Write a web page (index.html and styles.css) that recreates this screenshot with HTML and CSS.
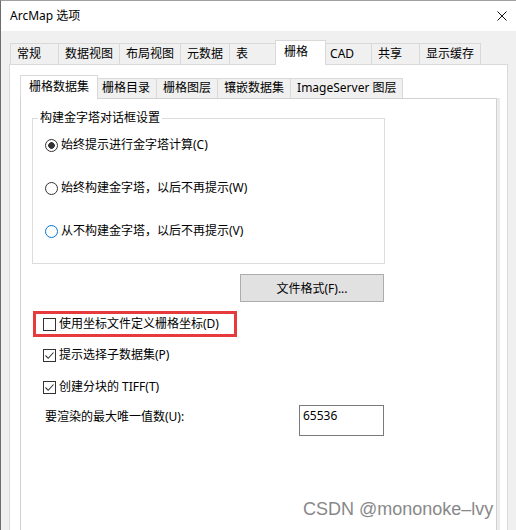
FILE: index.html
```html
<!DOCTYPE html>
<html lang="zh-CN">
<head>
    <meta charset="UTF-8">
    <title>ArcMap 选项</title>
    <link rel="stylesheet" href="styles.css">
</head>
<body>
    <div class="window">
        <div class="titlebar">
            <span class="title">ArcMap 选项</span>
            <svg class="close" width="10" height="10" viewBox="0 0 10 10">
                <path d="M0.5 0.5 L9.5 9.5 M9.5 0.5 L0.5 9.5" stroke="#111" stroke-width="1" fill="none"/>
            </svg>
        </div>
        <div class="dialog-body">
            <div class="tabs">
                <div class="tab">常规</div>
                <div class="tab">数据视图</div>
                <div class="tab">布局视图</div>
                <div class="tab">元数据</div>
                <div class="tab">表</div>
                <div class="tab active">栅格</div>
                <div class="tab">CAD</div>
                <div class="tab">共享</div>
                <div class="tab">显示缓存</div>
            </div>
            <div class="outer-panel">
                <div class="tabs sub-tabs">
                    <div class="tab active">栅格数据集</div>
                    <div class="tab">栅格目录</div>
                    <div class="tab">栅格图层</div>
                    <div class="tab">镶嵌数据集</div>
                    <div class="tab">ImageServer 图层</div>
                </div>
                <div class="inner-panel">
                    <fieldset class="group-box">
                        <legend>构建金字塔对话框设置</legend>
                        <div class="radio-row"><span class="radio checked"></span>始终提示进行金字塔计算(C)</div>
                        <div class="radio-row"><span class="radio"></span>始终构建金字塔，以后不再提示(W)</div>
                        <div class="radio-row"><span class="radio focus"></span>从不构建金字塔，以后不再提示(V)</div>
                    </fieldset>

                    <div class="actions">
                        <button class="btn">文件格式(F)...</button>
                    </div>

                    <div class="highlight">
                        <div class="check-row"><span class="checkbox"></span>使用坐标文件定义栅格坐标(D)</div>
                    </div>
                    <div class="check-row option">
                        <span class="checkbox"><svg width="11" height="11" viewBox="0 0 11 11"><path d="M1.5 5.5 L4.2 8.3 L9.5 2.5" stroke="#333" stroke-width="1.1" fill="none"/></svg></span>提示选择子数据集(P)
                    </div>
                    <div class="check-row option tiff">
                        <span class="checkbox"><svg width="11" height="11" viewBox="0 0 11 11"><path d="M1.5 5.5 L4.2 8.3 L9.5 2.5" stroke="#333" stroke-width="1.1" fill="none"/></svg></span>创建分块的 TIFF(T)
                    </div>

                    <div class="value-row">
                        <label>要渲染的最大唯一值数(U):</label>
                        <div class="value-box">65536</div>
                    </div>
                </div>
            </div>
        </div>
        <div class="watermark">CSDN @mononoke–lvy</div>
    </div>
</body>
</html>
```

FILE: styles.css
```css
body {
    margin: 0;
    font-family: "Noto Sans", "Noto Sans CJK SC", sans-serif;
    font-size: 12px;
    color: #000;
    background-color: #fff;
}

.window {
    position: relative;
    width: 516px;
    height: 530px;
    box-sizing: border-box;
    border-left: 1px solid #6d6d6d;
    border-top: 1px solid #a0a0a0;
    background-color: #f0f0f0;
    overflow: hidden;
}

.titlebar {
    height: 30px;
    background-color: #fff;
    display: flex;
    align-items: center;
    justify-content: space-between;
    padding: 0 9px;
}

.title {
    line-height: 16px;
}

.dialog-body {
    padding: 9px 8px 0 8px;
}

.tabs {
    display: flex;
    align-items: flex-end;
    height: 24px;
    padding-left: 1px;
}

.tab {
    box-sizing: border-box;
    height: 21px;
    min-width: 49px;
    padding: 0 6px;
    margin-right: -1px;
    border: 1px solid #d9d9d9;
    border-bottom: none;
    background-color: #f0f0f0;
    line-height: 19px;
    white-space: nowrap;
}

.tab.active {
    position: relative;
    z-index: 1;
    height: 25px;
    min-width: 51px;
    margin: 0 -3px -1px -2px;
    padding: 0 8px;
    background-color: #fff;
    line-height: 22px;
}

.outer-panel {
    height: 480px;
    padding: 10px 10px 0 10px;
    background-color: #fff;
    border: 1px solid #d9d9d9;
}

.sub-tabs {
    height: 23px;
    padding-left: 2px;
}

.sub-tabs .tab {
    height: 20px;
    min-width: 0;
    line-height: 18px;
}

.sub-tabs .tab.active {
    height: 24px;
    line-height: 22px;
}

.inner-panel {
    height: 460px;
    padding: 11px 0 0 11px;
    background-color: #fff;
    border: 1px solid #d2d2d2;
    box-shadow: 3px 0 0 #ebebeb;
}

.group-box {
    box-sizing: border-box;
    width: 353px;
    margin: 0;
    padding: 9px 0 22px 5px;
    border: 1px solid #dcdcdc;
    display: flex;
    flex-direction: column;
    gap: 23px;
}

.group-box legend {
    padding: 0 2px;
    line-height: 16px;
}

.radio-row,
.check-row {
    display: flex;
    align-items: center;
    height: 20px;
    line-height: 20px;
    white-space: nowrap;
}

.radio-row {
    margin-left: 7px;
}

.radio {
    box-sizing: border-box;
    width: 13px;
    height: 13px;
    margin-right: 3px;
    border: 1px solid #333;
    border-radius: 50%;
    background-color: #fff;
}

.radio.checked {
    background: radial-gradient(circle, #333 0, #333 3px, #fff 3.6px);
}

.radio.focus {
    border-color: #0078d7;
}

.actions {
    width: 352px;
    margin-top: 10px;
    display: flex;
    justify-content: flex-end;
}

.btn {
    box-sizing: border-box;
    width: 144px;
    height: 28px;
    padding: 0;
    border: 1px solid #adadad;
    background-color: #e1e1e1;
    font-family: inherit;
    font-size: 12px;
    color: #000;
}

.highlight {
    box-sizing: border-box;
    width: 204px;
    height: 26px;
    margin: 9px 0 0 1px;
    padding: 0 0 0 7px;
    border: 3px solid #e63a3c;
}

.checkbox {
    box-sizing: border-box;
    width: 13px;
    height: 13px;
    margin-right: 3px;
    border: 1px solid #333;
    background-color: #fff;
    display: flex;
    align-items: center;
    justify-content: center;
}

.option {
    margin: 8px 0 0 11px;
}

.option.tiff {
    margin-top: 12px;
}

.value-row {
    display: grid;
    grid-template-columns: 254px 85px;
    margin: 8px 0 0 13px;
}

.value-row label {
    margin-top: 2px;
    line-height: 20px;
}

.value-box {
    box-sizing: border-box;
    height: 31px;
    padding: 2px 3px;
    border: 1px solid #7a7a7a;
    line-height: 16px;
}

.watermark {
    position: absolute;
    left: 302px;
    top: 497px;
    font-family: "Liberation Sans", Arial, sans-serif;
    font-size: 18px;
    line-height: 22px;
    color: #888;
    text-shadow: 1px 1px 1px rgba(255, 255, 255, 0.7);
    white-space: nowrap;
}
```
